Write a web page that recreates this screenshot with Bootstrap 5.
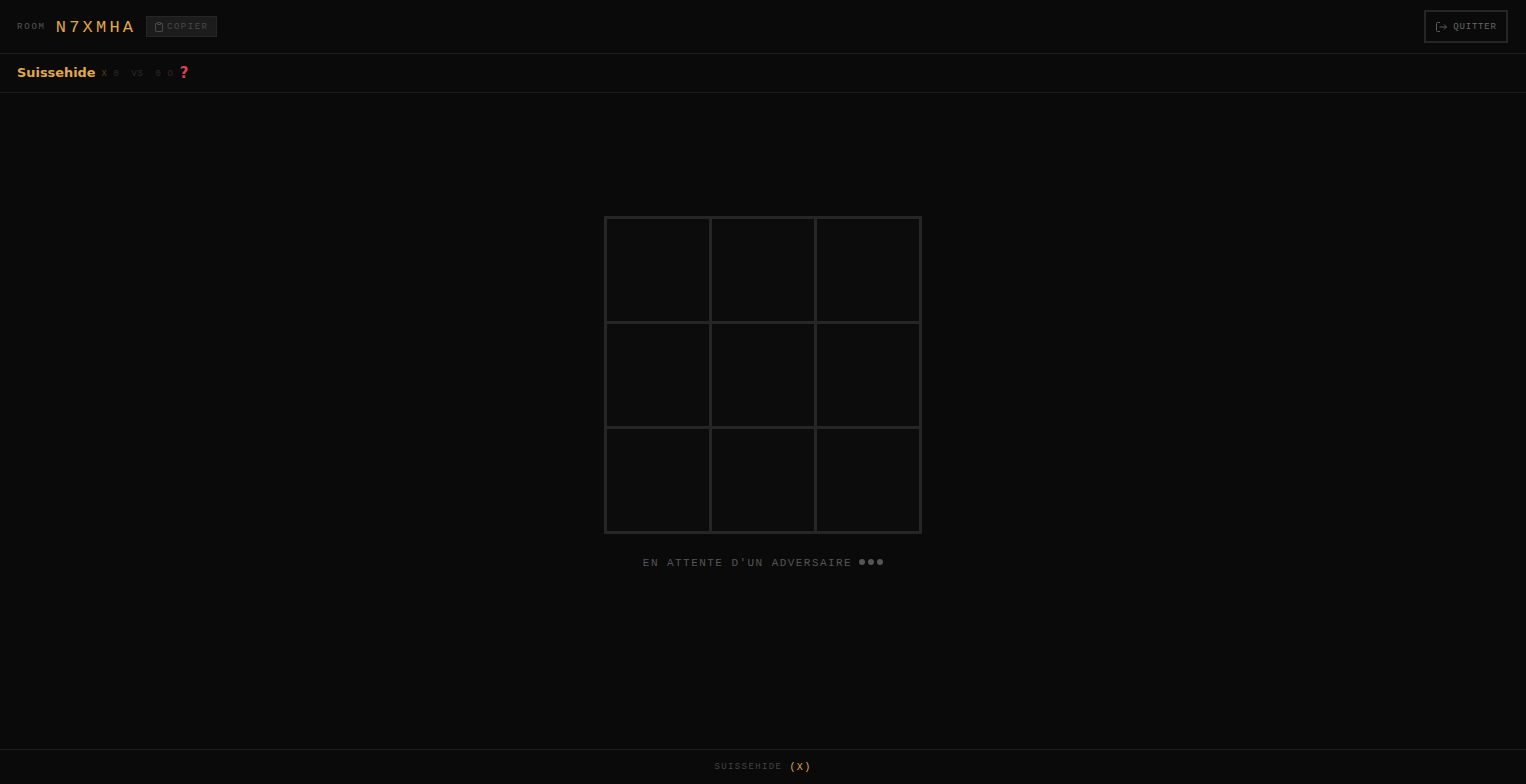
<!DOCTYPE html>
<html lang="fr">
<head>
    <meta charset="UTF-8">
    <meta name="viewport" content="width=device-width, initial-scale=1.0">
    <title>Morpion</title>
    <link rel="stylesheet" href="https://cdn.jsdelivr.net/npm/bootstrap@5.3.2/dist/css/bootstrap.min.css">
    <style>
        html, body {
            height: 100%;
        }
        body {
            background-color: #0a0a0a;
            font-family: "Liberation Mono", "DejaVu Sans Mono", monospace;
            color: #555;
        }
        .app-shell {
            height: 784px;
        }
        .top-bar {
            height: 54px;
            padding: 0 18px 0 17px;
            border-bottom: 1px solid #1e1e1e;
        }
        .room-label {
            padding-top: 3px;
            font-size: 9px;
            letter-spacing: 1.8px;
            color: #555;
        }
        .room-code {
            margin-left: 10px;
            padding-top: 1px;
            font-size: 17px;
            line-height: 1;
            letter-spacing: 3.2px;
            color: #e0a84a;
        }
        .copy-btn {
            margin-left: 10px;
            height: 21px;
            width: 71px;
            padding: 0;
            font-family: inherit;
            font-size: 9px;
            letter-spacing: 1.5px;
            color: #484848;
            background-color: #1c1c1c;
            border: 1px solid #262626;
            border-radius: 0;
        }
        .quit-btn {
            height: 33px;
            width: 84px;
            padding: 0 0 0 1px;
            font-family: inherit;
            font-size: 9px;
            letter-spacing: 0.8px;
            color: #666;
            background: transparent;
            border: 2px solid #262626;
            border-radius: 0;
            gap: 6px;
        }
        .btn-text {
            padding-top: 2px;
        }
        .score-bar {
            height: 39px;
            padding: 0 17px;
            border-bottom: 1px solid #1c1c1c;
        }
        .player-name {
            font-family: "DejaVu Sans", sans-serif;
            font-weight: 700;
            font-size: 12.9px;
            color: #e0a84a;
        }
        .score-text {
            margin-left: 6px;
            padding-top: 3px;
            font-size: 9px;
            letter-spacing: 0.6px;
            color: #2a2a2a;
        }
        .score-x {
            color: #54401f;
        }
        .score-vs {
            margin: 0 6px;
        }
        .score-o {
            color: #442028;
        }
        .opponent-name {
            margin-left: 6px;
            font-family: "DejaVu Sans", sans-serif;
            font-weight: 700;
            font-size: 15px;
            color: #d8405a;
        }
        .game-area {
            padding-bottom: 54px;
        }
        .board {
            display: grid;
            grid-template-columns: repeat(3, 1fr);
            gap: 3px;
            width: 318px;
            height: 318px;
            background-color: #262626;
            border: 3px solid #262626;
        }
        .board-cell {
            background-color: #0c0c0c;
        }
        .waiting-text {
            margin-top: 21px;
            font-size: 11px;
            letter-spacing: 1.45px;
            color: #555;
        }
        .wait-dot {
            width: 6px;
            height: 6px;
            border-radius: 50%;
            background-color: #555;
        }
        .wait-dots {
            margin-top: -3px;
            margin-left: 7px;
            gap: 3px;
        }
        .bottom-bar {
            height: 35px;
            padding-top: 1px;
            border-top: 1px solid #1e1e1e;
            font-size: 9px;
            letter-spacing: 1.4px;
            color: #444;
        }
        .bottom-mark {
            margin-left: 7px;
            color: #e0a84a;
            font-size: 10px;
        }
    </style>
</head>
<body>
    <div class="app-shell d-flex flex-column">
        <header class="top-bar d-flex align-items-center justify-content-between">
            <div class="d-flex align-items-center">
                <span class="room-label">ROOM</span>
                <span class="room-code">N7XMHA</span>
                <button class="copy-btn btn d-flex align-items-center justify-content-center gap-1">
                    <svg width="8" height="10" viewBox="0 0 8 10" fill="none" stroke="#484848"><path d="M2 1.5H1a.5.5 0 0 0-.5.5v7a.5.5 0 0 0 .5.5h6a.5.5 0 0 0 .5-.5V2a.5.5 0 0 0-.5-.5H6M2.5.5h3v2h-3z"/></svg>
                    <span class="btn-text">COPIER</span>
                </button>
            </div>
            <button class="quit-btn btn d-flex align-items-center justify-content-center">
                <svg width="11" height="10" viewBox="0 0 11 10" fill="none" stroke="#5a5a5a"><path d="M4 .5H1.5a1 1 0 0 0-1 1v7a1 1 0 0 0 1 1H4M3.5 5h7M8 2.5 10.5 5 8 7.5"/></svg>
                <span class="btn-text">QUITTER</span>
            </button>
        </header>
        <div class="score-bar d-flex align-items-center">
            <span class="player-name">Suissehide</span>
            <span class="score-text"><span class="score-x">X</span> 0<span class="score-vs"> VS </span>0 <span class="score-o">O</span></span>
            <span class="opponent-name">?</span>
        </div>
        <main class="game-area flex-grow-1 d-flex flex-column align-items-center justify-content-center">
            <div class="board">
                <div class="board-cell"></div>
                <div class="board-cell"></div>
                <div class="board-cell"></div>
                <div class="board-cell"></div>
                <div class="board-cell"></div>
                <div class="board-cell"></div>
                <div class="board-cell"></div>
                <div class="board-cell"></div>
                <div class="board-cell"></div>
            </div>
            <div class="waiting-text d-flex align-items-center">
                EN ATTENTE D'UN ADVERSAIRE
                <span class="wait-dots d-flex">
                    <span class="wait-dot"></span>
                    <span class="wait-dot"></span>
                    <span class="wait-dot"></span>
                </span>
            </div>
        </main>
        <footer class="bottom-bar d-flex align-items-center justify-content-center">
            SUISSEHIDE <span class="bottom-mark">(X)</span>
        </footer>
    </div>
    <script src="https://cdn.jsdelivr.net/npm/bootstrap@5.3.2/dist/js/bootstrap.bundle.min.js"></script>
</body>
</html>
